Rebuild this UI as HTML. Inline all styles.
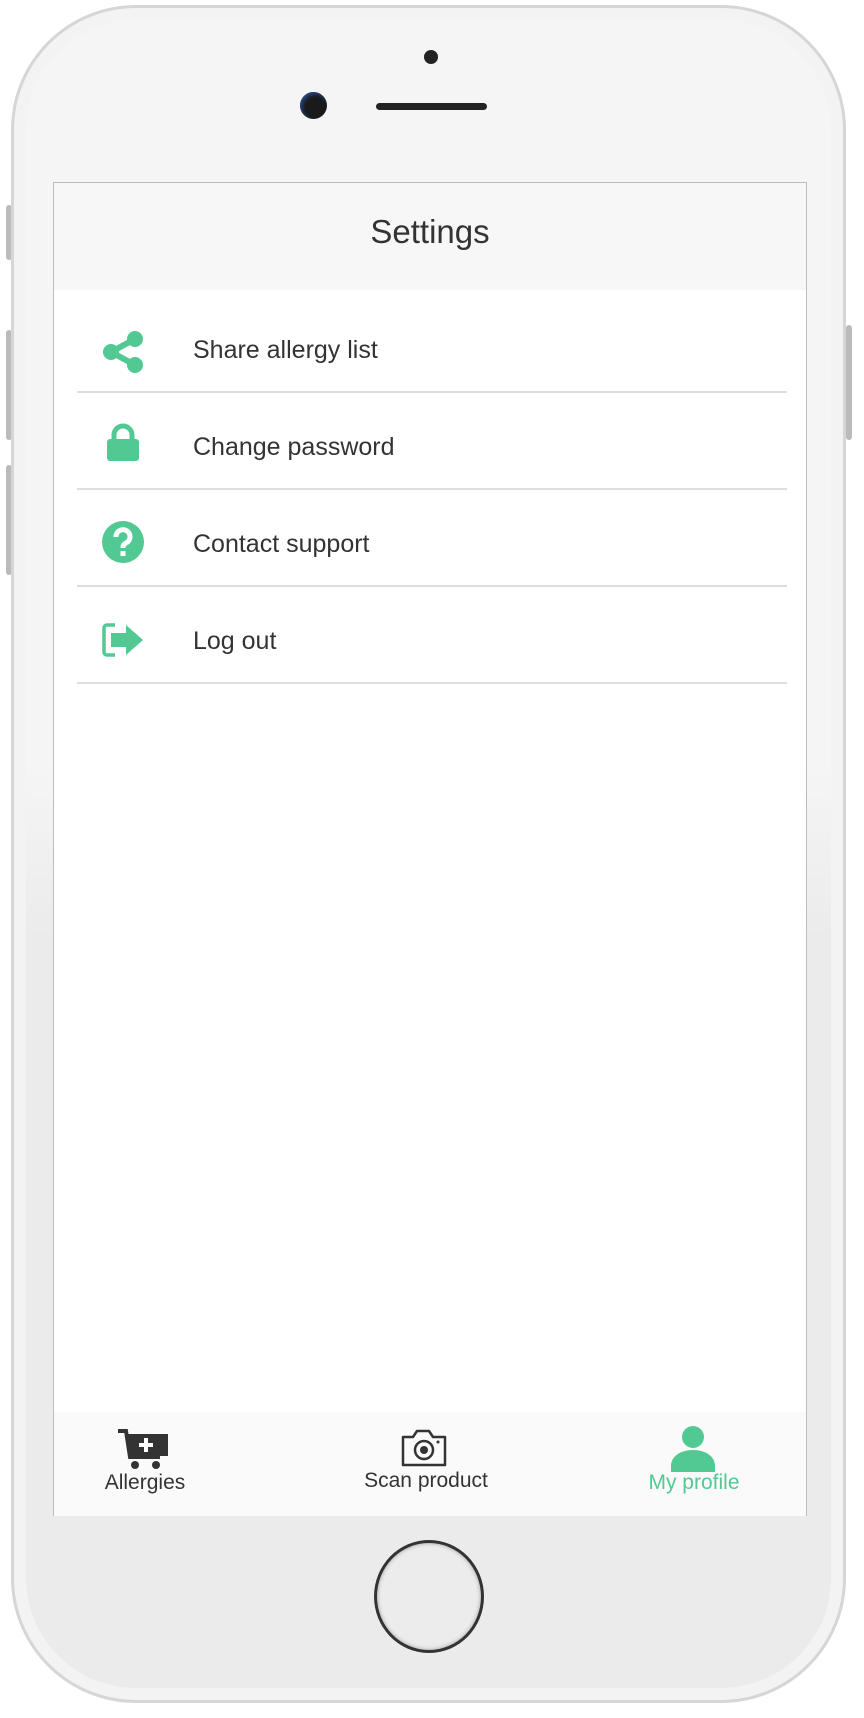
<!DOCTYPE html>
<html><head><meta charset="utf-8"><style>
*{margin:0;padding:0;box-sizing:border-box}
body{width:864px;height:1718px;background:#fff;position:relative;overflow:hidden;font-family:"Liberation Sans",sans-serif}
.phone{position:absolute;left:11px;top:5px;width:835px;height:1698px;border-radius:125px;background:linear-gradient(#f5f5f5 0,#f5f5f5 45%,#ebebeb 55%,#ebebeb 100%);border:3px solid #d6d6d6;box-shadow:inset 0 0 0 12px #f3f3f3}
.btn{position:absolute;width:6px;background:#bbb;border-radius:3px}
.screen{position:absolute;left:53px;top:182px;width:754px;height:1334px;background:#fff;border:1px solid #bdbdbd}
.hdr{height:107px;background:#f7f7f7;text-align:center;font-size:33px;color:#333;line-height:98px}
.row{position:absolute;left:23px;width:710px;height:97px;border-bottom:2px solid #dedede}
.row span{position:absolute;left:116px;top:6px;line-height:97px;font-size:25px;color:#333}
.row svg{position:absolute;left:45px;top:27px}
.tab{position:absolute;left:0;top:1229px;width:752px;height:104px;background:#fafafa}
.lbl{position:absolute;font-size:21px;color:#333;text-align:center;width:200px}
</style></head><body>
<div class="btn" style="left:6px;top:205px;height:55px"></div>
<div class="btn" style="left:6px;top:330px;height:110px"></div>
<div class="btn" style="left:6px;top:465px;height:110px"></div>
<div class="btn" style="left:846px;top:325px;height:115px"></div>
<div class="phone"></div>
<div style="position:absolute;left:424px;top:50px;width:14px;height:14px;border-radius:50%;background:#222"></div>
<div style="position:absolute;left:300px;top:92px;width:27px;height:27px;border-radius:50%;background:#1a1a1a;box-shadow:inset 2px 2px 4px #2a4a8a"></div>
<div style="position:absolute;left:376px;top:103px;width:111px;height:7px;border-radius:4px;background:#222"></div>
<div style="position:absolute;left:374px;top:1540px;width:110px;height:113px;border-radius:50%;border:3px solid #333;background:#ececec;box-shadow:inset 0 0 4px #999"></div>
<div class="screen">
 <div class="hdr">Settings</div>
 <div class="row" style="top:113px">
  <svg width="44" height="44" viewBox="0 0 44 44" style="left:24px;top:34px"><g fill="#52c993" stroke="#52c993"><line x1="10" y1="22" x2="34" y2="9" stroke-width="6"/><line x1="10" y1="22" x2="34" y2="35" stroke-width="6"/><circle cx="10" cy="22" r="8" stroke="none"/><circle cx="34" cy="9" r="8" stroke="none"/><circle cx="34" cy="35" r="8" stroke="none"/></g></svg>
  <span>Share allergy list</span></div>
 <div class="row" style="top:210px">
  <svg width="34" height="40" viewBox="0 0 34 40" style="left:29px;top:30px"><path d="M8 17V12a9 9 0 0 1 18 0v5" fill="none" stroke="#52c993" stroke-width="5"/><rect x="1" y="16" width="32" height="22" rx="3" fill="#52c993"/></svg>
  <span>Change password</span></div>
 <div class="row" style="top:307px">
  <svg width="44" height="44" viewBox="0 0 44 44" style="left:24px;top:30px"><circle cx="22" cy="22" r="21" fill="#52c993"/><path d="M15 17a7 7 0 1 1 10 6c-2 1-3 2-3 4v1" fill="none" stroke="#fff" stroke-width="5"/><rect x="19.5" y="31" width="5" height="5" fill="#fff"/></svg>
  <span>Contact support</span></div>
 <div class="row" style="top:404px">
  <svg width="44" height="36" viewBox="0 0 44 36" style="left:24px;top:35px"><path d="M14 3H6a3 3 0 0 0-3 3v24a3 3 0 0 0 3 3h8" fill="none" stroke="#52c993" stroke-width="3.5"/><path d="M10 11h15V3l17 15-17 15v-8H10z" fill="#52c993"/></svg>
  <span>Log out</span></div>
 <div class="tab">
  <svg width="50" height="44" viewBox="0 0 50 44" style="position:absolute;left:64px;top:16px"><path d="M0 3h8l4 26h30" fill="none" stroke="#333" stroke-width="4"/><path d="M10 6h40v22H13z" fill="#333"/><path d="M28 10v14M21 17h14" stroke="#fff" stroke-width="4"/><circle cx="17" cy="37" r="4" fill="#333"/><circle cx="38" cy="37" r="4" fill="#333"/></svg>
  <div class="lbl" style="left:-9px;top:59px">Allergies</div>
  <svg width="48" height="38" viewBox="0 0 48 38" style="position:absolute;left:346px;top:17px"><path d="M3 8h10l4-6h12l4 6h12v28H3z" fill="none" stroke="#333" stroke-width="2.5" stroke-linejoin="round"/><circle cx="24" cy="21" r="9" fill="none" stroke="#333" stroke-width="2.5"/><circle cx="24" cy="21" r="4" fill="#333"/><circle cx="38" cy="13" r="1.5" fill="#333"/></svg>
  <div class="lbl" style="left:272px;top:57px">Scan product</div>
  <svg width="48" height="46" viewBox="0 0 48 46" style="position:absolute;left:615px;top:14px"><ellipse cx="24" cy="11" rx="11" ry="11" fill="#52c993"/><path d="M2 46v-6c0-10 10-16 22-16s22 6 22 16v6z" fill="#52c993"/></svg>
  <div class="lbl" style="left:540px;top:59px;color:#52c993">My profile</div>
 </div>
</div>
</body></html>
